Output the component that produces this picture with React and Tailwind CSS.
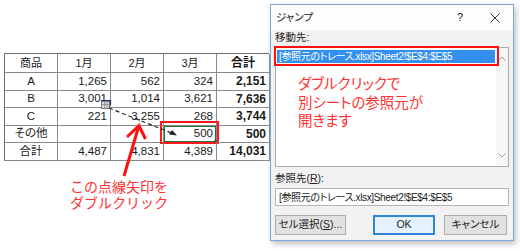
import React from "react";

const rows = [
  ["A", "1,265", "562", "324", "2,151"],
  ["B", "3,001", "1,014", "3,621", "7,636"],
  ["C", "221", "3,255", "268", "3,744"],
  ["その他", "", "", "500", "500"],
  ["合計", "4,487", "4,831", "4,389", "14,031"],
];

const jp = "[font-family:'Liberation_Sans','Noto_Sans_CJK_JP',sans-serif] [font-feature-settings:'palt']";

function Cell({ children, className = "", extra = null }) {
  return (
    <div className={"relative flex items-center border-r border-b border-[#8a8a8a] text-[#1a1a1a] " + className}>
      {children}
      {extra}
    </div>
  );
}

function Table() {
  return (
    <div className={"grid grid-cols-[repeat(5,53px)] border-l border-t border-[#6f6f6f] " + jp}>
      {["商品", "1月", "2月", "3月"].map((h) => (
        <Cell key={h} className="h-[19px] justify-center text-[11px]">{h}</Cell>
      ))}
      <Cell className="h-[19px] justify-center text-[12px] font-bold">合計</Cell>
      {rows.map((r, ri) =>
        r.map((v, ci) => {
          if (ci === 0)
            return (
              <Cell key={ri + "-" + ci} className="h-[17.5px] justify-center text-[11.5px]">{v}</Cell>
            );
          if (ci === 4)
            return (
              <Cell key={ri + "-" + ci} className="h-[17.5px] justify-end pr-[3px] text-[12px] font-bold">{v}</Cell>
            );
          const sel = ri === 3 && ci === 3;
          return (
            <Cell
              key={ri + "-" + ci}
              className="h-[17.5px] justify-end pr-[3px] text-[11.5px]"
              extra={
                sel ? (
                  <>
                    <div className="absolute inset-0 border border-[#217346]">
                      <div className="absolute right-[-2px] bottom-[-2px] w-[3px] h-[3px] bg-[#217346]" />
                    </div>
                    <div className="absolute left-[-4px] right-[-3px] top-[-5px] bottom-[-2px] border-2 border-[#ff1a1a]" />
                  </>
                ) : null
              }
            >
              {v}
            </Cell>
          );
        })
      )}
    </div>
  );
}

function Chevron({ up }) {
  return (
    <svg width="8" height="5" viewBox="0 0 8 5">
      <path d={up ? "M0.5 4.5 L4 1 L7.5 4.5" : "M0.5 0.5 L4 4 L7.5 0.5"} fill="none" stroke="#a0a0a0" strokeWidth="1" />
    </svg>
  );
}

function Dialog() {
  return (
    <div className={"ml-px w-[244px] h-[237px] border border-[#7aa7d9] bg-[#f2f2f2] flex flex-col shadow-[2px_3px_6px_rgba(0,0,0,0.25)] " + jp}>
      <div className="h-[25px] bg-[#fdfdfd] flex items-center pl-[5px] text-[10.5px] text-[#222]">
        <span>ジャンプ</span>
        <span className="ml-auto mr-[27px] text-[11px]">?</span>
        <svg width="10" height="10" viewBox="0 0 10 10" className="mr-[13px]">
          <path d="M0.5 0.5 L9.5 9.5 M9.5 0.5 L0.5 9.5" stroke="#333" strokeWidth="1" />
        </svg>
      </div>
      <div className="flex flex-col pl-[4px] pr-[4px]">
        <div className="h-[17px] flex items-end pb-[1px] text-[10.5px] text-[#222]">移動先:</div>
        <div className="relative h-[120px] border border-[#acacac] bg-white flex">
          <div className="flex-1 flex flex-col pt-[2px] pl-[1px]">
            <div className="h-[13px] mr-[1px] bg-[#3390ee] text-white text-[10px] tracking-[-0.35px] leading-[13px] pl-[2px] whitespace-nowrap">
              [参照元のトレース.xlsx]Sheet2!$E$4:$E$5
            </div>
            <div className="pl-[21px] pt-[11px] text-[14.5px] leading-[18.5px] text-[#ff3030] [font-family:'Noto_Sans_CJK_JP',sans-serif]">
              ダブルクリックで<br />別シートの参照元が<br />開きます
            </div>
          </div>
          <div className="w-[12px] bg-[#f6f6f6] flex flex-col items-center justify-between py-[8px]">
            <Chevron up />
            <Chevron />
          </div>
          <div className="absolute left-[-2px] top-[-2px] w-[225px] h-[20px] border-2 border-[#ff1010]" />
        </div>
        <div className="h-[19px] mt-[2px] flex items-center text-[10.5px] text-[#222]">
          参照先(<span className="underline">R</span>):
        </div>
        <div className="h-[18px] border border-[#b5b5b5] bg-white flex items-center pl-[3px] text-[10px] tracking-[-0.35px] text-[#222] whitespace-nowrap">
          [参照元のトレース.xlsx]Sheet2!$E$4:$E$5
        </div>
        <div className="mt-[9px] flex items-center text-[10.5px] text-[#222]">
          <div className="w-[71px] h-[20px] border border-[#adadad] bg-[#e1e1e1] flex items-center justify-center">
            セル選択(<span className="underline">S</span>)...
          </div>
          <div className="ml-[27px] w-[62px] h-[20px] border-2 border-[#2f86d9] bg-[#e5f1fb] flex items-center justify-center">
            OK
          </div>
          <div className="ml-[9px] w-[63px] h-[20px] border border-[#adadad] bg-[#e1e1e1] flex items-center justify-center">
            キャンセル
          </div>
        </div>
      </div>
    </div>
  );
}

export default function App() {
  return (
    <div className="relative w-[520px] h-[251px] bg-white overflow-hidden flex items-start pl-[4px] pt-[4px]">
      <div className="mt-[49px] w-[265px] flex flex-col">
        <Table />
        <div className="mt-[17px] w-[230px] text-center text-[14px] leading-[16px] text-[#ff3030] [font-family:'Noto_Sans_CJK_JP',sans-serif]">
          この点線矢印を<br />ダブルクリック
        </div>
      </div>
      <Dialog />
      <svg className="absolute left-0 top-0 pointer-events-none" width="520" height="251" viewBox="0 0 520 251">
        <rect x="101.5" y="101.5" width="8" height="7" fill="#d9d9d9" stroke="#7b7b7b" strokeWidth="1" />
        <path d="M101.5 104.5 H109.5 M104.5 101.5 V108.5 M107 101.5 V108.5" stroke="#8c8c8c" strokeWidth="0.8" />
        <path d="M101 100.5 H110.5 V105" fill="none" stroke="#1f2f6f" strokeWidth="1.2" />
        <path d="M109 108 L174 134" stroke="#222" strokeWidth="1.2" strokeDasharray="4 3" fill="none" />
        <path d="M177 135.5 L169 134.5 L172 130 Z" fill="#222" />
        <path d="M124 176 L138.5 127" stroke="#ff1010" strokeWidth="3" fill="none" />
        <path d="M127 137 L139 125.5 L145.5 139" stroke="#ff1010" strokeWidth="3" fill="none" strokeLinejoin="miter" />
      </svg>
    </div>
  );
}
